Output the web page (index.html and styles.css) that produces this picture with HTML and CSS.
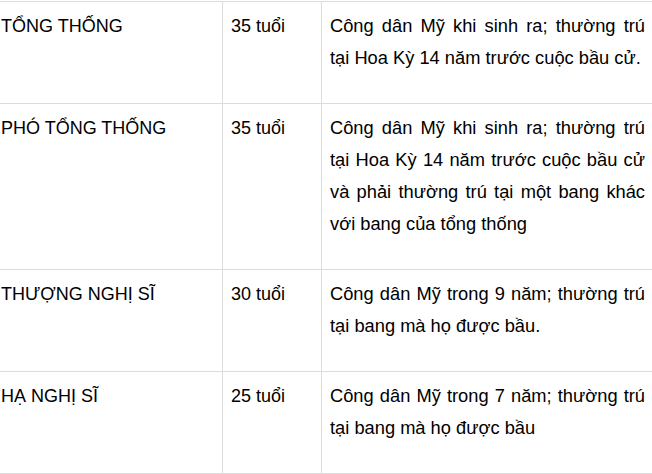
FILE: index.html
```html
<!DOCTYPE html>
<html lang="vi">
<head>
<meta charset="utf-8">
<link rel="stylesheet" href="styles.css">
</head>
<body>
<table class="req">
  <colgroup>
    <col class="c-office">
    <col class="c-age">
    <col class="c-cond">
  </colgroup>
  <tbody>
    <tr>
      <td>TỔNG THỐNG</td>
      <td>35 tuổi</td>
      <td class="cond">Công dân Mỹ khi sinh ra; thường trú tại Hoa Kỳ 14 năm trước cuộc bầu cử.</td>
    </tr>
    <tr>
      <td>PHÓ TỔNG THỐNG</td>
      <td>35 tuổi</td>
      <td class="cond">Công dân Mỹ khi sinh ra; thường trú tại Hoa Kỳ 14 năm trước cuộc bầu cử và phải thường trú tại một bang khác với bang của tổng thống</td>
    </tr>
    <tr>
      <td>THƯỢNG NGHỊ SĨ</td>
      <td>30 tuổi</td>
      <td class="cond">Công dân Mỹ trong 9 năm; thường trú tại bang mà họ được bầu.</td>
    </tr>
    <tr>
      <td>HẠ NGHỊ SĨ</td>
      <td>25 tuổi</td>
      <td class="cond">Công dân Mỹ trong 7 năm; thường trú tại bang mà họ được bầu</td>
    </tr>
  </tbody>
</table>
</body>
</html>
```

FILE: styles.css
```css
html, body {
  margin: 0;
  padding: 0;
  background: #ffffff;
}
body {
  padding-top: 1px;
  overflow: hidden;
  font-family: "Liberation Sans", Arial, sans-serif;
  font-size: 18px;
  color: #000000;
}
.req {
  border-collapse: collapse;
  table-layout: fixed;
  width: 661px;
  margin-left: -8px;
}
.c-office { width: 230px; }
.c-age { width: 99px; }
.c-cond { width: 332px; }
.req td {
  border: 1px solid #dcdcdc;
  padding: 8px 8px 29px 8px;
  line-height: 32px;
  vertical-align: top;
}
.req td.cond {
  font-size: 18.3px;
  text-align: justify;
}
```
